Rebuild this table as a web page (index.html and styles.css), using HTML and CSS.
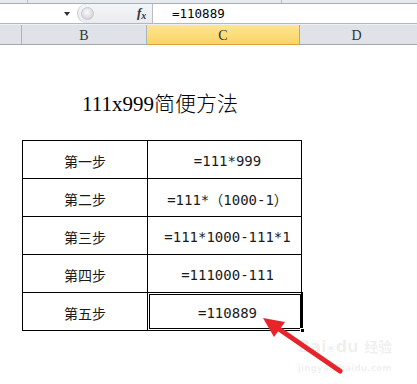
FILE: index.html
```html
<!DOCTYPE html>
<html lang="zh">
<head>
<meta charset="utf-8">
<link rel="stylesheet" href="styles.css">
</head>
<body>
<div class="app">
  <div class="topstrip">
    <span class="ts-a"></span><span class="ts-b"></span>
  </div>
  <div class="fbar">
    <div class="namebox"><span class="dd"></span></div>
    <div class="fxzone">
      <span class="knob"></span>
      <span class="fx">f<sub>x</sub></span>
    </div>
    <div class="formula">=110889</div>
  </div>
  <div class="colheads">
    <div class="corner"></div>
    <div class="ch ch-b">B</div>
    <div class="ch ch-c">C</div>
    <div class="ch ch-d">D</div>
  </div>
  <div class="sheet">
    <h1 class="title">111x999<span class="cjk">简便方法</span></h1>
    <table class="steps">
      <colgroup><col class="c1"><col class="c2"></colgroup>
      <tr><td class="lbl">第一步</td><td class="val">=111*999</td></tr>
      <tr><td class="lbl">第二步</td><td class="val">=111*（1000-1）</td></tr>
      <tr><td class="lbl">第三步</td><td class="val">=111*1000-111*1</td></tr>
      <tr><td class="lbl">第四步</td><td class="val">=111000-111</td></tr>
      <tr><td class="lbl">第五步</td><td class="val sel">=110889<span class="handle"></span></td></tr>
    </table>
  </div>
  <div class="watermark">
    <div class="wm-logo">Bai<span class="paw">❀</span>du <span class="wm-cjk">经验</span></div>
    <div class="wm-url">jingyan.baidu.com</div>
  </div>
  <svg class="arrow" width="417" height="384" viewBox="0 0 417 384">
    <line x1="340" y1="371" x2="276" y2="327" stroke="#e8242b" stroke-width="5" stroke-linecap="round"/>
    <polygon points="263,318 285,322 274,337" fill="#e8242b"/>
  </svg>
</div>
</body>
</html>
```
FILE: styles.css
```css
* { box-sizing: border-box; }
html, body { margin: 0; padding: 0; background: #fff; }
body { width: 417px; height: 384px; overflow: hidden; font-family: "DejaVu Sans Mono", monospace; }
.app { position: relative; width: 417px; height: 384px; overflow: hidden; }

.topstrip {
  height: 4px; background: #e6e9ee; border-bottom: 1px solid #a9afb8;
  display: flex;
}
.ts-a { width: 28px; border-right: 1px solid #b8bdc5; }
.ts-b { width: 254px; border-right: 1px solid #b8bdc5; }

.fbar {
  display: flex; height: 20px; background: #fff; border-bottom: 1px solid #b3b8c0;
}
.namebox { width: 77px; position: relative; }
.dd {
  position: absolute; left: 64px; top: 8px;
  width: 0; height: 0;
  border-left: 3.5px solid transparent; border-right: 3.5px solid transparent;
  border-top: 4px solid #333;
}
.fxzone {
  width: 76px; background: linear-gradient(#f4f5f7, #e9ebee);
  border-radius: 10px 0 0 10px; border-left: 1px solid #c3c8cf;
  border-right: 1px solid #b9bec6;
  position: relative;
}
.knob {
  position: absolute; left: 3px; top: 3px; width: 13px; height: 13px;
  border-radius: 50%;
  background: radial-gradient(circle at 45% 40%, #fbfbfc 0, #dadde2 60%, #c4c8ce 100%);
  border: 1px solid #c6cad0;
}
.fx {
  position: absolute; left: 59px; top: 2px;
  font-family: "Liberation Serif", serif; font-style: italic; font-weight: bold;
  font-size: 13px; color: #333; line-height: 14px;
}
.fx sub { font-size: 10px; vertical-align: -2px; }
.formula {
  flex: 1; padding-left: 19px; font-size: 12.5px; line-height: 20px; color: #000;
}

.colheads {
  display: flex; height: 21px;
  background: #dfe3e8; border-top: 1px solid #eef0f3;
  border-bottom: 1px solid #9fa6b0;
  font-family: "Liberation Serif", serif; font-size: 14px; color: #333;
}
.corner { width: 22px; border-right: 1px solid #aeb4bc; }
.ch { display: flex; align-items: center; justify-content: center; padding-top: 2px; }
.ch-b { width: 125px; border-right: 1px solid #aeb4bc; }
.ch-c {
  width: 153px; background: linear-gradient(#fde68f, #f9d468);
  border-right: 1px solid #e2a23a; border-bottom: 1px solid #e2a23a; margin-bottom: -1px;
}
.ch-d { flex: 1; padding-right: 4px; }

.sheet { padding-top: 45px; }
.title {
  margin: 0 0 0 82px; font-weight: normal;
  font-family: "Liberation Serif", "Noto Sans CJK SC", serif;
  font-size: 21px; line-height: 24px; color: #000;
}
.title .cjk { font-family: "Noto Sans CJK SC", sans-serif; font-size: 21px; font-weight: 300; }

.steps {
  margin: 24px 0 0 22px; border-collapse: collapse; table-layout: fixed;
  width: 279px;
}
.c1 { width: 125px; }
.c2 { width: 154px; }
.steps td {
  border: 1px solid #000; height: 38px; padding: 2px 0 0 0; text-align: center;
  font-size: 14px; color: #1a1a1a;
}
.steps td.lbl { font-family: "Noto Sans CJK SC", sans-serif; font-size: 14px; }
.steps td.val { font-family: "DejaVu Sans Mono", "Noto Sans CJK SC", monospace; padding-left: 6px; }
.steps td.sel { position: relative; }
.steps td.sel::after {
  content: ""; position: absolute; left: -1px; top: -1px; right: -2px; bottom: -1px;
  border: 3px double #000;
}
.handle {
  position: absolute; right: -4px; bottom: -3px; width: 5px; height: 5px;
  background: #000; border: 1px solid #fff; z-index: 2;
}

.watermark {
  position: absolute; left: 298px; top: 336px; color: rgba(0,0,0,0.08);
  font-family: "DejaVu Sans", sans-serif;
}
.wm-logo { font-size: 16px; font-weight: bold; line-height: 20px; white-space: nowrap; }
.paw { font-size: 11px; }
.wm-cjk { font-family: "Noto Sans CJK SC", sans-serif; font-size: 14px; }
.wm-url { font-size: 9px; font-weight: bold; line-height: 11px; margin-top: 4px; white-space: nowrap; }

.arrow { position: absolute; left: 0; top: 0; pointer-events: none; }
```
